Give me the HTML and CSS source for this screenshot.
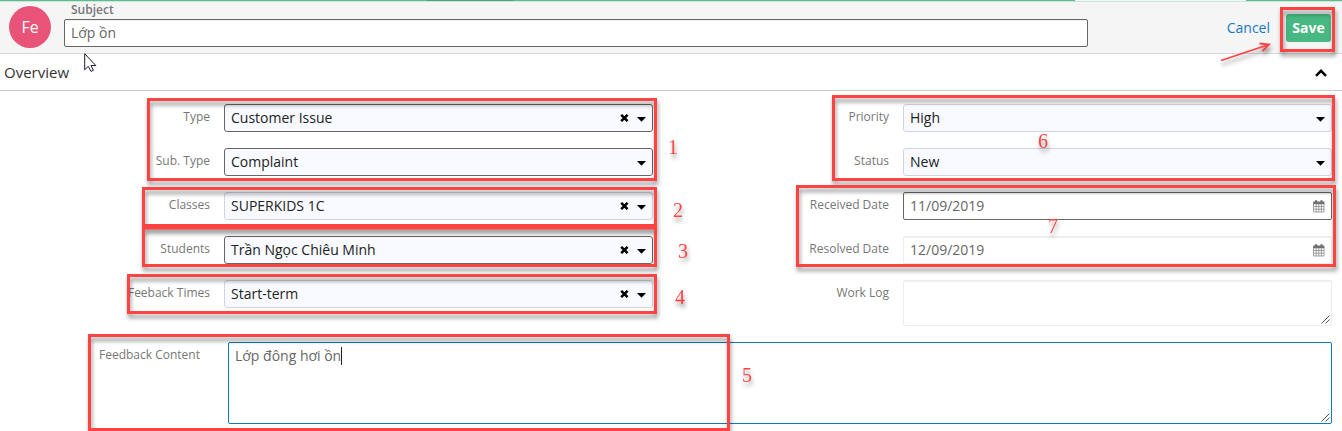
FILE: index.html
```html
<!DOCTYPE html>
<html lang="vi">
<head>
<meta charset="utf-8">
<title>Feedback</title>
<link rel="stylesheet" href="styles.css">
</head>
<body>
<svg class="defs" width="0" height="0">
  <symbol id="clear" viewBox="0 0 9 8"><path d="M1.200 .8l6.400 6.400M7.600 .8L1.200 7.200" stroke="#000" stroke-width="2.500" fill="none"/></symbol>
  <symbol id="caret" viewBox="0 0 9 5"><path d="M0 0h9L4.500 4.700z" fill="#000"/></symbol>
  <symbol id="calendar" viewBox="0 0 12 13">
    <path d="M.5 3v9h10.500V3M.5 6.500h10.500M.5 9.200h10.500M3.200 4v8M5.800 4v8M8.400 4v8" fill="none" stroke="#8a8a8a" stroke-width=".8"/>
    <path d="M.2 1.500h11.100V4.200H.2zM2 .3h2.200v2.400H2zM7.400.3h2.200v2.400H7.400z" fill="#707070"/>
  </symbol>
</svg>
<div class="navstrip"><i class="nav-a"></i><i class="nav-active"></i><i class="nav-b"></i><i class="nav-search"></i><i class="nav-c"></i></div>
<header class="header">
  <div class="avatar">Fe</div>
  <div class="subject">
    <label class="subject-label">Subject</label>
    <div class="input strong subject-input">Lớp ồn</div>
  </div>
  <div class="actions"><a class="cancel">Cancel</a><button class="save">Save</button></div>
</header>
<section class="panel-head">
  <span>Overview</span>
  <svg class="chevron" viewBox="0 0 12 8"><path d="M1 6.800L6 1.800l5 5" fill="none" stroke="#000" stroke-width="2.500"/></svg>
</section>
<main class="form">
  <div class="columns">
    <div class="column left">
      <div class="row"><label>Type</label><div class="input select strong"><span>Customer Issue</span><svg class="x"><use href="#clear"/></svg><svg class="caret"><use href="#caret"/></svg></div></div>
      <div class="row"><label>Sub. Type</label><div class="input select strong"><span>Complaint</span><svg class="caret"><use href="#caret"/></svg></div></div>
      <div class="row"><label>Classes</label><div class="input select"><span>SUPERKIDS 1C</span><svg class="x"><use href="#clear"/></svg><svg class="caret"><use href="#caret"/></svg></div></div>
      <div class="row"><label>Students</label><div class="input select strong"><span>Trần Ngọc Chiêu Minh</span><svg class="x"><use href="#clear"/></svg><svg class="caret"><use href="#caret"/></svg></div></div>
      <div class="row"><label>Feeback Times</label><div class="input select"><span>Start-term</span><svg class="x"><use href="#clear"/></svg><svg class="caret"><use href="#caret"/></svg></div></div>
    </div>
    <div class="column right">
      <div class="row"><label>Priority</label><div class="input select"><span>High</span><svg class="caret"><use href="#caret"/></svg></div></div>
      <div class="row"><label>Status</label><div class="input select"><span>New</span><svg class="caret"><use href="#caret"/></svg></div></div>
      <div class="row"><label>Received Date</label><div class="input date strong"><span>11/09/2019</span><svg class="cal"><use href="#calendar"/></svg></div></div>
      <div class="row"><label>Resolved Date</label><div class="input date"><span>12/09/2019</span><svg class="cal"><use href="#calendar"/></svg></div></div>
      <div class="row"><label>Work Log</label><div class="input area worklog"><svg class="grip" viewBox="0 0 9 9"><path d="M.5 8.500l8-8M4.500 8.500l4-4" stroke="#555"/></svg></div></div>
    </div>
  </div>
  <div class="row content-row">
    <label>Feedback Content</label>
    <div class="input area content"><span class="typed">Lớp đông hơi ồn</span><svg class="grip" viewBox="0 0 9 9"><path d="M.5 8.500l8-8M4.500 8.500l4-4" stroke="#555"/></svg></div>
  </div>
</main>
<svg class="annotations" viewBox="0 0 1342 431">
  <g class="frames">
    <rect x="148.500" y="99.500" width="507" height="80"/>
    <rect x="143.500" y="188.500" width="512" height="37"/>
    <rect x="143.500" y="228" width="512" height="37.500"/>
    <rect x="128.500" y="275.500" width="527" height="37"/>
    <rect x="89.500" y="335.500" width="639" height="94"/>
    <rect x="833.500" y="96.500" width="500" height="83"/>
    <rect x="797.500" y="186.500" width="537" height="79"/>
    <rect x="1281.500" y="8.500" width="52" height="42"/>
  </g>
  <path class="arrow" d="M1221 60.500L1269 44.500M1259.500 43.500l9.500 1-6.500 6.500"/>
  <g class="numbers">
    <text x="668" y="154">1</text>
    <text x="673" y="217">2</text>
    <text x="678" y="258">3</text>
    <text x="675" y="304">4</text>
    <text x="742" y="382">5</text>
    <text x="1038" y="148">6</text>
    <text x="1048" y="233">7</text>
  </g>
</svg>
<svg class="cursor" viewBox="0 0 13 20"><path d="M.7.800v16l3.600-3.400 2.700 5 2.400-1.200-2.500-4.700h4.900z" fill="#fff" stroke="#1c1c2c" stroke-width="1"/></svg>
</body>
</html>
```
FILE: styles.css
```css
* { box-sizing: border-box; }
body {
  margin: 0;
  width: 1342px;
  height: 431px;
  overflow: hidden;
  position: relative;
  background: #fff;
  color: #333;
  font: 14px/20px "Open Sans", sans-serif;
}
.defs { position: absolute; }
.navstrip { display: flex; height: 1px; background: #56c28a; }
.nav-a { width: 427px; }
.nav-active { width: 86px; background: #3fa873; }
.nav-b { width: 562px; }
.nav-search { width: 171px; background: #e6faf1; }
.header {
  display: flex;
  height: 53px;
  padding-left: 9px;
  background: #f5f5f5;
  border-top: 1px solid #d3e0dc;
  border-bottom: 1px solid #d8d8d8;
}
.avatar {
  width: 42px;
  height: 42px;
  margin-top: 4px;
  border-radius: 50%;
  background: #e95378;
  color: #fff;
  font-size: 16px;
  font-weight: 500;
  line-height: 42px;
  text-align: center;
}
.subject { width: 1024px; margin-left: 13px; }
.subject-label {
  display: block;
  height: 17px;
  padding-left: 7px;
  color: #777;
  font-size: 12px;
  font-weight: 600;
  line-height: 16px;
}
.actions {
  display: flex;
  flex: 1;
  justify-content: flex-end;
  gap: 16px;
  padding: 12px 11px 0 0;
}
.cancel { color: #1679c5; line-height: 28px; }
.save {
  width: 45px;
  height: 28px;
  padding: 0;
  border: 0;
  border-radius: 3px;
  background: #47b881;
  color: #fff;
  font: bold 14px/28px "Open Sans", sans-serif;
}
.panel-head {
  display: flex;
  align-items: center;
  justify-content: space-between;
  height: 37px;
  padding: 0 15px 0 4px;
  border-bottom: 1px solid #ccc;
  font-size: 15px;
  line-height: 36px;
}
.chevron { width: 12px; height: 8px; margin-top: 2px; }
.form { padding-top: 13px; }
.columns { display: flex; }
.column { display: grid; grid-auto-rows: 28px; gap: 16px; }
.left { width: 653px; }
.right { width: 679px; }
.row { display: flex; align-items: flex-start; gap: 14px; }
.row label {
  width: 210px;
  color: #777;
  font-size: 12px;
  line-height: 26px;
  text-align: right;
  white-space: nowrap;
}
.right label { width: 236px; }
.input {
  height: 28px;
  padding: 0 6px;
  border: 1px solid #ececec;
  border-radius: 2px;
  background: #fff;
  color: #666;
  line-height: 26px;
  box-shadow: inset 0 1px #f0f0f0;
}
.row .input { display: flex; flex: 1; align-items: center; }
.input > span { flex: 1; }
.input.select {
  border-color: #cfd6de;
  border-radius: 3px;
  background: #f8faff;
  color: #222;
  box-shadow: none;
}
.input.strong, .input.select.strong { border-color: #666; }
.x { width: 9px; height: 8px; margin-right: 8px; }
.caret { width: 9px; height: 5px; margin-top: 2px; }
.cal { width: 12px; height: 13px; }
.row .area { justify-content: flex-end; align-items: flex-end; padding: 0 1px 1px 6px; }
.row .worklog { height: 46px; }
.grip { width: 9px; height: 9px; }
.content-row { margin-top: 34px; gap: 28px; width: 1332px; }
.content-row label { width: 200px; }
.row .content { height: 82px; border-color: #0d78c4; box-shadow: none; }
.typed { align-self: flex-start; }
.typed::after {
  content: "";
  display: inline-block;
  width: 1px;
  height: 18px;
  background: #222;
  vertical-align: -4px;
}
/* Numbered callouts lie over the form */
.annotations { position: absolute; inset: 0; width: 1342px; height: 431px; }
.frames rect { fill: none; stroke: #ff4242; stroke-width: 3; }
.frames, .arrow { filter: drop-shadow(1px 4px 2px rgba(0, 0, 0, .42)); }
.arrow { fill: none; stroke: #ff4242; stroke-width: 1.8; }
.numbers {
  fill: #ff4242;
  font: 20px "Liberation Serif", serif;
  filter: drop-shadow(1px 4px 2px rgba(0, 0, 0, .42));
}
.cursor { position: absolute; left: 84px; top: 53px; width: 13px; height: 20px; }
```
